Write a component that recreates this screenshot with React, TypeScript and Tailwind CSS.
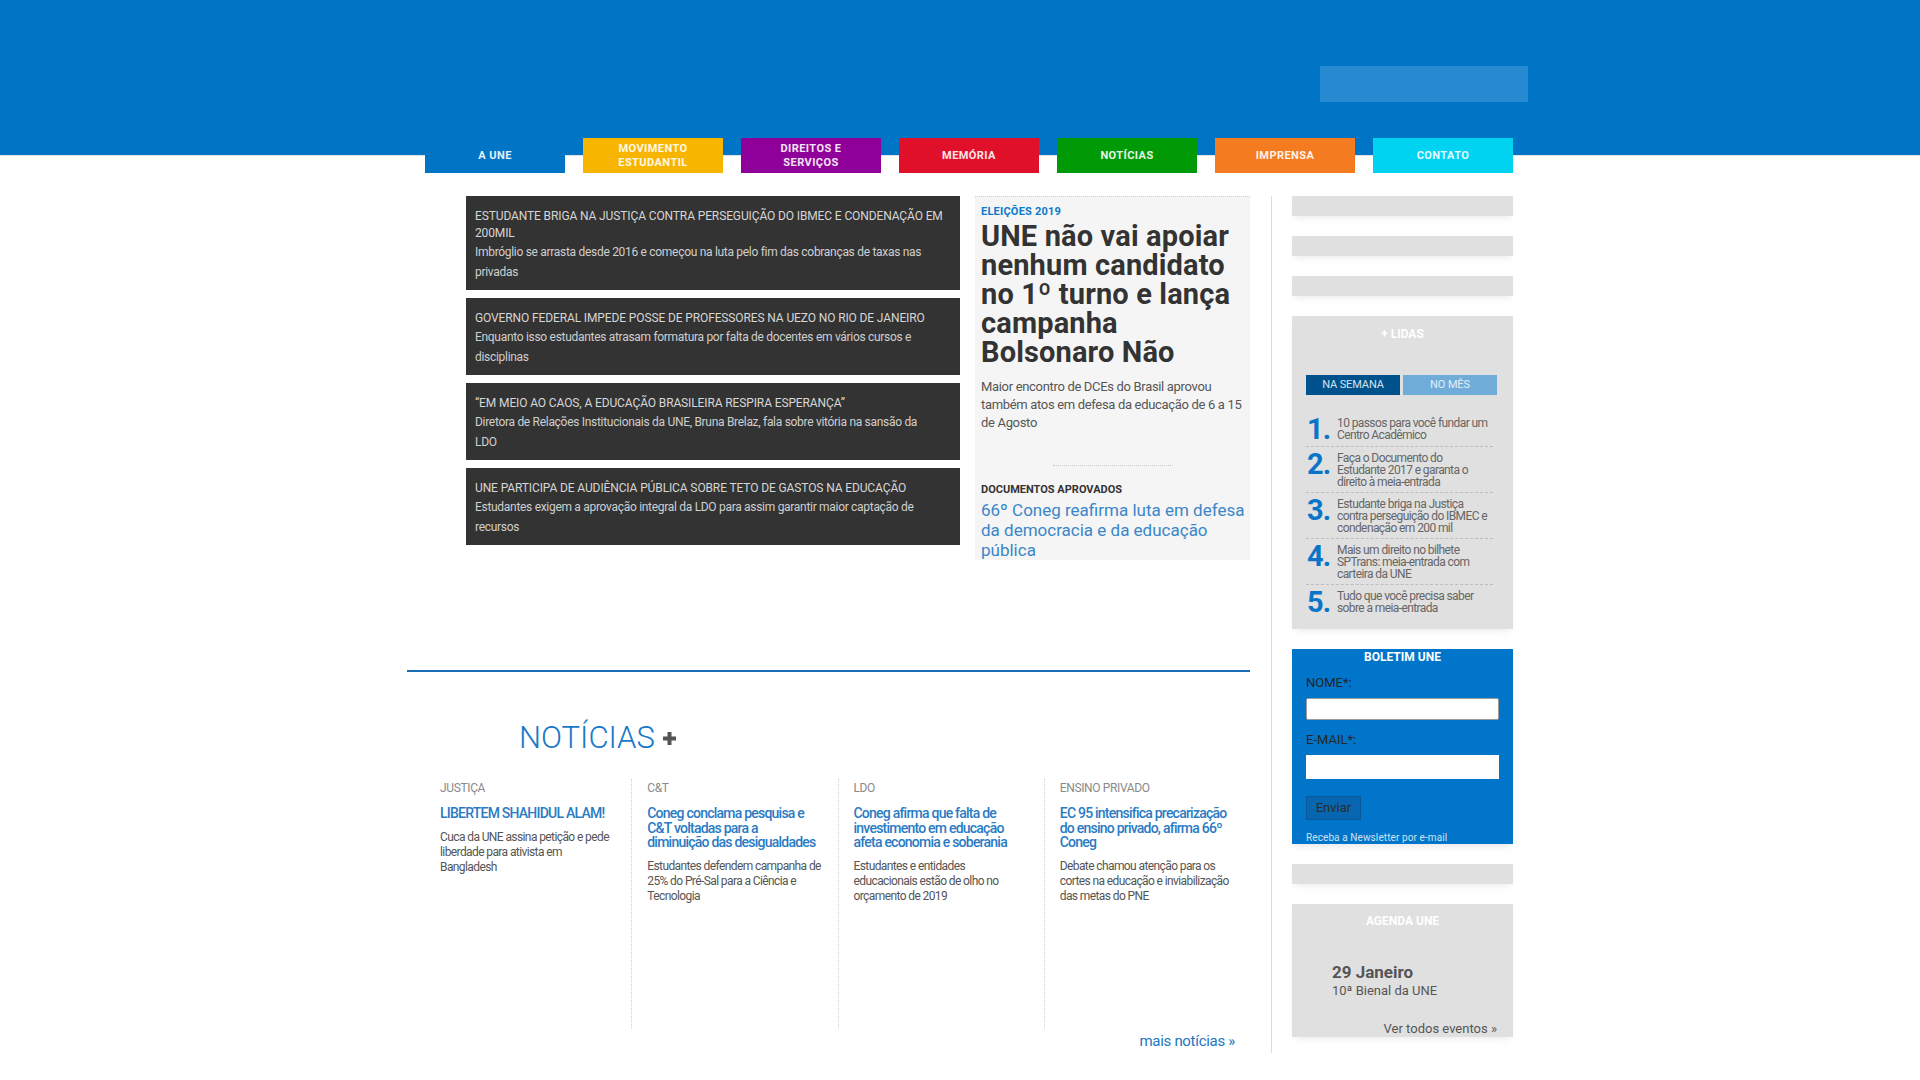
const font = "font-['Roboto','Liberation_Sans',sans-serif]"

const navItems = [
  { label: ['A UNE'], bg: 'bg-[#0075c6]' },
  { label: ['MOVIMENTO', 'ESTUDANTIL'], bg: 'bg-[#f7b500]' },
  { label: ['DIREITOS E', 'SERVIÇOS'], bg: 'bg-[#8e0099]' },
  { label: ['MEMÓRIA'], bg: 'bg-[#e0102b]' },
  { label: ['NOTÍCIAS'], bg: 'bg-[#009a06]' },
  { label: ['IMPRENSA'], bg: 'bg-[#f47b20]' },
  { label: ['CONTATO'], bg: 'bg-[#00d3f1]' },
]

const highlights = [
  {
    title: ['ESTUDANTE BRIGA NA JUSTIÇA CONTRA PERSEGUIÇÃO DO IBMEC E CONDENAÇÃO EM', '200MIL'],
    text: ['Imbróglio se arrasta desde 2016 e começou na luta pelo fim das cobranças de taxas nas', 'privadas'],
  },
  {
    title: ['GOVERNO FEDERAL IMPEDE POSSE DE PROFESSORES NA UEZO NO RIO DE JANEIRO'],
    text: ['Enquanto isso estudantes atrasam formatura por falta de docentes em vários cursos e', 'disciplinas'],
  },
  {
    title: ['“EM MEIO AO CAOS, A EDUCAÇÃO BRASILEIRA RESPIRA ESPERANÇA”'],
    text: ['Diretora de Relações Institucionais da UNE, Bruna Brelaz, fala sobre vitória na sansão da', 'LDO'],
  },
  {
    title: ['UNE PARTICIPA DE AUDIÊNCIA PÚBLICA SOBRE TETO DE GASTOS NA EDUCAÇÃO'],
    text: ['Estudantes exigem a aprovação integral da LDO para assim garantir maior captação de', 'recursos'],
  },
]

const maisLidas = [
  ['10 passos para você fundar um', 'Centro Acadêmico'],
  ['Faça o Documento do', 'Estudante 2017 e garanta o', 'direito à meia-entrada'],
  ['Estudante briga na Justiça', 'contra perseguição do IBMEC e', 'condenação em 200 mil'],
  ['Mais um direito no bilhete', 'SPTrans: meia-entrada com', 'carteira da UNE'],
  ['Tudo que você precisa saber', 'sobre a meia-entrada'],
]

const noticias = [
  {
    cat: 'JUSTIÇA',
    title: ['LIBERTEM SHAHIDUL ALAM!'],
    text: ['Cuca da UNE assina petição e pede', 'liberdade para ativista em', 'Bangladesh'],
  },
  {
    cat: 'C&T',
    title: ['Coneg conclama pesquisa e', 'C&T voltadas para a', 'diminuição das desigualdades'],
    text: ['Estudantes defendem campanha de', '25% do Pré-Sal para a Ciência e', 'Tecnologia'],
  },
  {
    cat: 'LDO',
    title: ['Coneg afirma que falta de', 'investimento em educação', 'afeta economia e soberania'],
    text: ['Estudantes e entidades', 'educacionais estão de olho no', 'orçamento de 2019'],
  },
  {
    cat: 'ENSINO PRIVADO',
    title: ['EC 95 intensifica precarização', 'do ensino privado, afirma 66º', 'Coneg'],
    text: ['Debate chamou atenção para os', 'cortes na educação e inviabilização', 'das metas do PNE'],
  },
]

function Lines({ lines }: { lines: string[] }) {
  return (
    <>
      {lines.map((l) => (
        <span key={l} className="block whitespace-nowrap">
          {l}
        </span>
      ))}
    </>
  )
}

function GrayBar() {
  return <div className="h-[20px] bg-[#e0e0e0] shadow-[0_5px_7px_-3px_rgba(0,0,0,0.08)]" />
}

export default function App() {
  return (
    <div className={`min-h-screen bg-white ${font}`}>
      <header className="h-[156px] border-b border-[#e4e4e4] bg-[#0075c6]">
        <div className="mx-auto w-[1106px] pt-[66px]">
          <div className="ml-[913px] h-[36px] w-[208px] bg-[#2689d1]" />
        </div>
      </header>

      <nav className="mx-auto -mt-[18px] flex w-[1106px] gap-[18px] pl-[18px]">
        {navItems.map((item) => (
          <a
            key={item.label.join(' ')}
            href="#"
            className={`flex h-[35px] w-[140px] flex-col items-center justify-center text-center text-[11px] leading-[14px] font-bold tracking-[0.04em] text-white/90 ${item.bg}`}
          >
            {item.label.map((l) => (
              <span key={l}>{l}</span>
            ))}
          </a>
        ))}
      </nav>

      <main className="mx-auto mt-[23px] flex w-[1106px] pb-[60px]">
        <div className="w-[843px]">
          <section className="flex pl-[59px]">
            <div className="flex w-[494px] flex-col gap-[8px]">
              {highlights.map((h) => (
                <a key={h.title[0]} href="#" className="block bg-[#333333] px-[9px] pt-[12px] pb-[8px]">
                  <p className="text-[12px] leading-[17px] tracking-[-0.01em] text-[#d6d6d6]">
                    <Lines lines={h.title} />
                  </p>
                  <p className="text-[12px] leading-[20px] tracking-[-0.025em] text-[#cfcfcf]">
                    <Lines lines={h.text} />
                  </p>
                </a>
              ))}
            </div>

            <article className="ml-[15px] w-[275px] border-t border-dotted border-[#cfcfcf] bg-[#f5f5f5] px-[6px]">
              <p className="mt-[8px] text-[11px] leading-[14px] font-bold tracking-[0.02em] text-[#0a7acc]">ELEIÇÕES 2019</p>
              <h1 className="mt-[3px] text-[29px] leading-[29px] font-bold tracking-[0.005em] text-[#333]">
                <Lines lines={['UNE não vai apoiar', 'nenhum candidato', 'no 1º turno e lança', 'campanha', 'Bolsonaro Não']} />
              </h1>
              <p className="mt-[11px] text-[13px] leading-[18px] tracking-[-0.025em] text-[#555]">
                <Lines lines={['Maior encontro de DCEs do Brasil aprovou', 'também atos em defesa da educação de 6 a 15', 'de Agosto']} />
              </p>
              <div className="mx-auto mt-[33px] w-[120px] border-t border-dotted border-[#c8c8c8]" />
              <p className="mt-[17px] text-[11px] leading-[14px] font-bold text-[#333]">DOCUMENTOS APROVADOS</p>
              <a href="#" className="mt-[3px] block text-[17px] leading-[20px] text-[#3a86c8]">
                <Lines lines={['66º Coneg reafirma luta em defesa', 'da democracia e da educação', 'pública']} />
              </a>
            </article>
          </section>

          <div className="mt-[110px] h-[2px] bg-[#1a6fb8]" />

          <h2 className="mt-[48px] flex items-center pl-[112px] text-[31px] leading-[36px] font-light text-[#1878c8]">
            NOTÍCIAS
            <svg className="ml-[8px]" width="13" height="13" viewBox="0 0 13 13">
              <rect x="4.5" y="0" width="4" height="13" fill="#555" />
              <rect x="0" y="4.5" width="13" height="4" fill="#555" />
            </svg>
          </h2>

          <div className="mt-[23px] ml-[18px] grid grid-cols-4">
            {noticias.map((n, i) => (
              <div
                key={n.cat}
                className={`min-h-[250px] pt-[2px] pl-[15px] ${i > 0 ? 'border-l border-dotted border-[#d0d0d0]' : ''}`}
              >
                <p className="text-[12px] leading-[14px] tracking-[-0.03em] text-[#8a8a8a]">{n.cat}</p>
                <a href="#" className="mt-[11px] block text-[14px] leading-[14.5px] font-medium tracking-[-0.055em] text-[#2a7bc4]">
                  <Lines lines={n.title} />
                </a>
                <p className="mt-[9px] text-[12px] leading-[15px] tracking-[-0.05em] text-[#555]">
                  <Lines lines={n.text} />
                </p>
              </div>
            ))}
          </div>
          <div className="pr-[15px] text-right">
            <a href="#" className="text-[15px] leading-[20px] tracking-[-0.02em] text-[#2275bf]">
              mais notícias »
            </a>
          </div>
        </div>

        <div className="ml-[21px] border-l border-[#dcdcdc] pl-[20px]">
          <aside className="flex w-[221px] flex-col gap-[20px]">
            <GrayBar />
            <GrayBar />
            <GrayBar />

            <section className="bg-[#e0e0e0] pt-[10px] pr-[16px] pb-[10px] pl-[14px] shadow-[0_5px_7px_-3px_rgba(0,0,0,0.08)]">
              <h3 className="pl-[2px] text-center text-[12px] leading-[16px] font-bold text-white">+ LIDAS</h3>
              <div className="mt-[33px] flex gap-[3px] text-[11px] leading-[20px] tracking-[-0.01em]">
                <span className="w-[94px] bg-[#00528c] text-center text-[#d5e3ef]">NA SEMANA</span>
                <span className="w-[94px] bg-[#70acd8] text-center text-[#e3eef8]">NO MÊS</span>
              </div>
              <ol className="mt-[17px] w-[187px]">
                {maisLidas.map((item, i) => (
                  <li
                    key={item[0]}
                    className={`flex pt-[5px] pb-[4px] ${i < maisLidas.length - 1 ? 'border-b border-dashed border-[#bdbdbd]' : ''}`}
                  >
                    <span className="w-[31px] shrink-0 pl-px text-[29px] leading-[25px] font-bold tracking-[-0.03em] text-[#0a75c8]">
                      {i + 1}.
                    </span>
                    <span className="text-[12px] leading-[12px] tracking-[-0.05em] text-[#666]">
                      <Lines lines={item} />
                    </span>
                  </li>
                ))}
              </ol>
            </section>

            <section className="bg-[#0075c9] px-[14px] shadow-[0_5px_7px_-3px_rgba(0,0,0,0.1)]">
              <h3 className="text-center text-[12px] leading-[16px] font-bold text-white">BOLETIM UNE</h3>
              <label className="mt-[10px] block text-[13px] leading-[16px] text-[#262626]">NOME*:</label>
              <input className="mt-[7px] block h-[22px] w-[193px] rounded-[2px] border border-[#9a9a9a] bg-white" />
              <label className="mt-[12px] block text-[13px] leading-[16px] text-[#262626]">E-MAIL*:</label>
              <input className="mt-[7px] block h-[24px] w-[193px] bg-white" />
              <button className="mt-[17px] block h-[24px] w-[55px] border border-[#0a5a9a] bg-[#0866b0] text-[13px] text-[#2b2b2b]">
                Enviar
              </button>
              <p className="mt-[11px] text-[10px] leading-[13px] tracking-[0.01em] text-[#cfe2f3]">Receba a Newsletter por e-mail</p>
            </section>

            <GrayBar />

            <section className="bg-[#e0e0e0] pt-[9px] shadow-[0_5px_7px_-3px_rgba(0,0,0,0.08)]">
              <h3 className="text-center text-[12px] leading-[16px] font-bold text-white">AGENDA UNE</h3>
              <p className="mt-[33px] pl-[40px] text-[17px] leading-[20px] font-bold text-[#555]">29 Janeiro</p>
              <p className="pl-[40px] text-[13px] leading-[18px] text-[#555]">10ª Bienal da UNE</p>
              <p className="mt-[21px] pr-[16px] text-right text-[13px] leading-[16px] text-[#555]">Ver todos eventos »</p>
            </section>
          </aside>
        </div>
      </main>
    </div>
  )
}
